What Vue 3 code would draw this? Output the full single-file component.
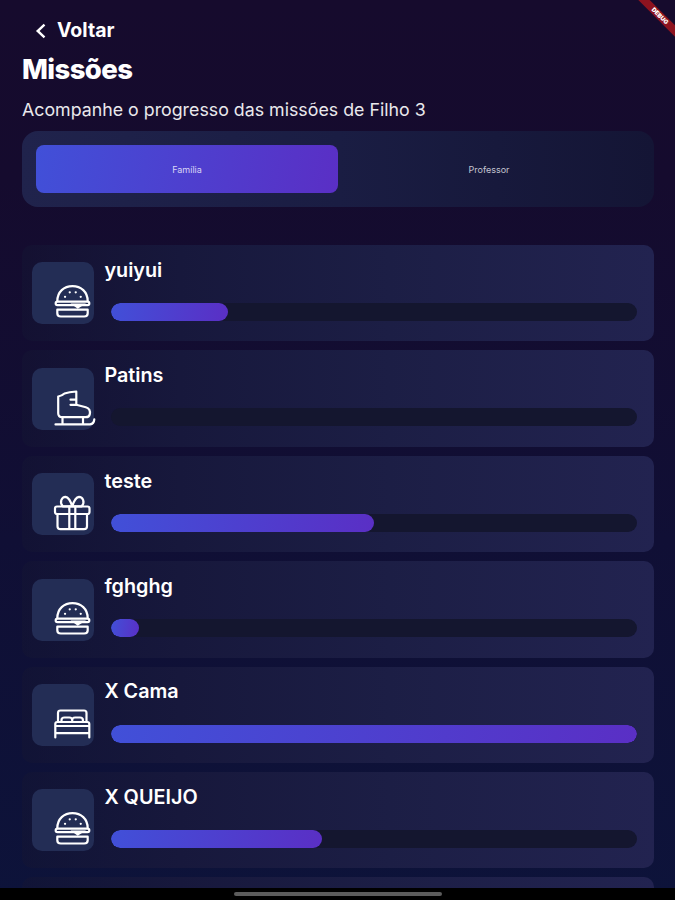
<template>
  <div class="screen">
    <div class="debug-banner">DEBUG</div>

    <main class="content">
      <button class="back-btn">
        <svg class="back-icon" viewBox="0 0 12 16">
          <path d="M9.5 1.7 2.7 8l6.8 6.3" />
        </svg>
        <span>Voltar</span>
      </button>

      <h1 class="title">Missões</h1>
      <p class="subtitle">Acompanhe o progresso das missões de Filho 3</p>

      <div class="tabs">
        <button
          v-for="tab in tabs"
          :key="tab"
          class="tab"
          :class="{ active: tab === activeTab }"
          @click="activeTab = tab"
        >
          {{ tab }}
        </button>
      </div>

      <div class="mission-list">
        <div v-for="mission in missions" :key="mission.id" class="mission-card">
          <div class="mission-icon">
            <svg v-if="mission.icon === 'burger'" viewBox="0 0 42 40">
              <path d="M4.3 18.2C4.3 8.800 11 3.2 19.500 3.200S34.700 8.800 34.700 18.200" />
              <rect x="2.700" y="18.700" width="33.600" height="3.500" rx="1.700" />
              <path class="solid" d="M17.500 20.500h15.500l-8.300 5.300z" />
              <path d="M4.300 26.700h30.400v3.500q0 3.300-3.500 3.300H7.800q-3.500 0-3.500-3.300z" />
              <path d="M12 13.800h.1M16.700 9.300h.1M22.700 9.300h.1M27.700 13.800h.1" />
            </svg>
            <svg v-else-if="mission.icon === 'skate'" viewBox="0 0 42 40">
              <path d="M23.300 2.500v13.300l9.500 2.400c3.700 1.200 4.600 4 4 7-.5 2.300-2 3-4 3H9.200q-4-.3-4-4V7.500q3.500-.5 6.300-3Q16 3 23.300 2.500" />
              <path d="M17.500 10.700h5.500M17.500 15.800h6M9.500 28.200v7M30 28.200v7M2.500 35.400h34.500q4-.5 4.300-5" />
            </svg>
            <svg v-else-if="mission.icon === 'gift'" viewBox="0 0 42 40">
              <rect x="2" y="12.5" width="34.5" height="7.5" rx="2" />
              <path d="M4.500 20.200v12q0 3 3 3h23.500q3 0 3-3V20.200M16.300 12.700v22.500M22.300 12.700v22.500" />
              <path d="M19.200 12.300H9.700C6 8 9 2.800 12.500 2.800q4 .5 6.700 9.500Q22 3.300 26 2.800c3.500 0 6.500 5 2.800 9.500z" />
            </svg>
            <svg v-else viewBox="0 0 42 40">
              <path d="M5 17V8q0-2.500 2.500-2.500h23.500q2.500 0 2.500 2.500V17" />
              <path d="M8.500 16.500v-1.500q0-2.500 3-2.500h4.700q3 0 3 2.500v1.500M19.200 15q0-2.500 3-2.500h4.700q3 0 3 2.500v1.500" />
              <path d="M2.300 32.500V19q0-2 2-2h30q2 0 2 2v13.500M2.300 21h34M2.300 28.200h34" />
            </svg>
          </div>
          <div class="mission-body">
            <h2 class="mission-name">{{ mission.name }}</h2>
            <div class="progress">
              <div v-if="mission.progress" class="progress-fill" :style="{ width: mission.progress + '%' }"></div>
            </div>
          </div>
        </div>
        <div class="mission-card"></div>
      </div>
    </main>

    <footer class="system-bar">
      <div class="home-indicator"></div>
    </footer>
  </div>
</template>

<script setup>
import { ref } from 'vue';

const tabs = ['Família', 'Professor'];
const activeTab = ref('Família');

const missions = [
  { id: 1, name: 'yuiyui', icon: 'burger', progress: 22.2 },
  { id: 2, name: 'Patins', icon: 'skate', progress: 0 },
  { id: 3, name: 'teste', icon: 'gift', progress: 50 },
  { id: 4, name: 'fghghg', icon: 'burger', progress: 5.2 },
  { id: 5, name: 'X Cama', icon: 'bed', progress: 100 },
  { id: 6, name: 'X QUEIJO', icon: 'burger', progress: 40 }
];
</script>

<style>
body {
  margin: 0;
  background: #000;
}
</style>

<style scoped>
.screen {
  position: relative;
  display: flex;
  flex-direction: column;
  height: 900px;
  overflow: hidden;
  font-family: Inter, 'Liberation Sans', sans-serif;
  color: #fff;
  background: linear-gradient(180deg, #160b2d 0%, #150b2e 20%, #100f35 60%, #0d133a 100%);
}

.debug-banner {
  position: absolute;
  top: 12px;
  right: -25px;
  width: 80px;
  height: 8px;
  transform: rotate(45deg);
  background: #8d131f;
  font-size: 6px;
  font-weight: 900;
  line-height: 8px;
  text-align: center;
}

.content {
  flex: 1;
  min-height: 0;
  overflow: hidden;
  padding: 17px 21px 0 22px;
}

button {
  border: 0;
  padding: 0;
  background: none;
  color: inherit;
  font-family: inherit;
}

.back-btn {
  display: flex;
  align-items: center;
  gap: 10px;
  height: 26px;
  margin-left: 13px;
  font-size: 19.5px;
  font-weight: 700;
}

.back-icon {
  width: 12px;
  height: 16px;
  margin-top: 1px;
  fill: none;
  stroke: #fff;
  stroke-width: 2.4;
}

.title {
  margin: 8px 0 0;
  font-size: 27.5px;
  font-weight: 800;
  line-height: 36px;
  letter-spacing: -0.6px;
}

.subtitle {
  margin: 11px 0 0;
  font-size: 17.8px;
  line-height: 24px;
  color: #e9e8ec;
}

.tabs {
  display: flex;
  box-sizing: border-box;
  height: 76px;
  margin-top: 9px;
  padding: 14px;
  border-radius: 16px;
  background: linear-gradient(90deg, #20234c, #1a1d43 50%, #141535);
}

.tab {
  flex: 1;
  border-radius: 8px;
  font-size: 9px;
  color: #c3c3d0;
}

.tab.active {
  background: linear-gradient(100deg, #4150d8, #5a2fc5);
  color: #d8d5f5;
}

.mission-list {
  display: flex;
  flex-direction: column;
  gap: 9px;
  margin-top: 38px;
}

.mission-card {
  display: flex;
  flex-shrink: 0;
  box-sizing: border-box;
  height: 96.4px;
  padding: 17.4px 17px 0 10.4px;
  border-radius: 10px;
  background: linear-gradient(90deg, rgba(20, 21, 51, 0.5), #17183c 25%, #1c1e45 58%, #222350);
}

.mission-icon {
  flex-shrink: 0;
  width: 62px;
  height: 62px;
  border-radius: 10px;
  background: #232d55;
}

.mission-icon svg {
  display: block;
  width: 42px;
  height: 40px;
  margin: 21px 0 0 21px;
  overflow: visible;
  fill: none;
  stroke: #fff;
  stroke-width: 2.2;
  stroke-linecap: round;
  stroke-linejoin: round;
}

.mission-icon .solid {
  fill: #fff;
  stroke: none;
}

.mission-body {
  flex: 1;
  margin-left: 10px;
}

.mission-name {
  margin: -4.6px 0 0;
  font-size: 19.8px;
  font-weight: 600;
  line-height: 24px;
}

.progress {
  height: 18px;
  margin: 21.2px 0 0 6.8px;
  border-radius: 9px;
  overflow: hidden;
  background: #14162f;
}

.progress-fill {
  height: 100%;
  border-radius: 9px;
  background: linear-gradient(100deg, #4150d8, #5a2fc5);
}

.system-bar {
  display: flex;
  justify-content: center;
  align-items: center;
  height: 12px;
  background: #000;
}

.home-indicator {
  width: 208px;
  height: 4px;
  border-radius: 2px;
  background: #5c5c5c;
}
</style>
